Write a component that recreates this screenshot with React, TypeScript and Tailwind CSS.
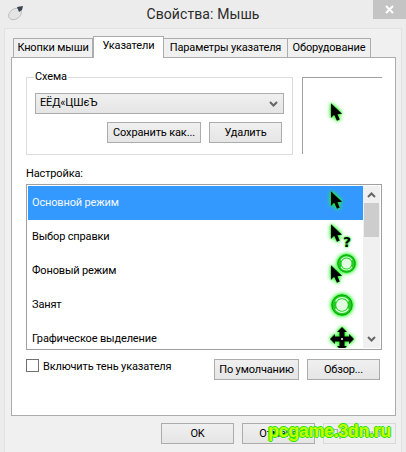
import React from 'react';

const GLOW = '[filter:drop-shadow(0_0_1px_#1dff1d)_drop-shadow(0_0_2px_#1dff1d)]';

const Arrow = ({ className = '' }: { className?: string }) => (
  <svg width="13" height="20" viewBox="0 0 14 21" className={`${GLOW} ${className}`}>
    <path d="M1 1 L1 17 L4.5 13.5 L7.5 20 L10.5 18.5 L8 13 L13 12.5 Z" fill="#000" />
  </svg>
);

const Ring = ({ size }: { size: number }) => (
  <svg width={size} height={size} viewBox="0 0 24 24" className={GLOW}>
    <circle cx="12" cy="12" r="6.5" fill="#e2fde2" />
    <circle cx="12" cy="12" r="9" fill="none" stroke="#22cc22" strokeWidth="5" />
    <circle cx="12" cy="12" r="11" fill="none" stroke="#0b9a0b" strokeWidth="1" />
    <path d="M5 8 A8 8 0 0 1 19 8" fill="none" stroke="#d8ffd8" strokeWidth="1.4" />
    <path d="M19 16 A8 8 0 0 1 5 16" fill="none" stroke="#d8ffd8" strokeWidth="1.4" />
  </svg>
);

const MoveIcon = () => (
  <svg width="26" height="26" viewBox="0 0 26 26" className={GLOW}>
    <path
      d="M13 1 L18 6 L15.5 6 L15.5 10.5 L20 10.5 L20 8 L25 13 L20 18 L20 15.5 L15.5 15.5 L15.5 20 L18 20 L13 25 L8 20 L10.5 20 L10.5 15.5 L6 15.5 L6 18 L1 13 L6 8 L6 10.5 L10.5 10.5 L10.5 6 L8 6 Z"
      fill="#000"
    />
    <circle cx="13" cy="13" r="1" fill="#fff" />
  </svg>
);

const rows = [
  { name: 'Основной режим', icon: 'arrow' },
  { name: 'Выбор справки', icon: 'help' },
  { name: 'Фоновый режим', icon: 'background' },
  { name: 'Занят', icon: 'busy' },
  { name: 'Графическое выделение', icon: 'move' },
];

const RowIcon = ({ icon }: { icon: string }) => {
  if (icon === 'arrow') return <Arrow className="absolute left-[302px] top-[4px]" />;
  if (icon === 'help')
    return (
      <>
        <Arrow className="absolute left-[302px] top-[3px]" />
        <span className="absolute left-[315px] top-[12px] font-['DejaVu_Sans',sans-serif] text-[14px] leading-[20px] font-bold text-black [text-shadow:0_0_3px_#1dff1d,0_0_2px_#1dff1d]">?</span>
      </>
    );
  if (icon === 'background')
    return (
      <>
        <Arrow className="absolute left-[302px] top-[10px]" />
        <span className="absolute left-[309px] top-0"><Ring size={19} /></span>
      </>
    );
  if (icon === 'busy')
    return <span className="absolute left-[303px] top-[6px]"><Ring size={22} /></span>;
  return <span className="absolute left-[301px] top-[4px]"><MoveIcon /></span>;
};

const Btn = ({ w, children, disabled }: { w: string; children: React.ReactNode; disabled?: boolean }) => (
  <button
    className={`${w} h-[21px] border text-[11px] tracking-[-0.15px] leading-none whitespace-nowrap ${
      disabled ? 'border-[#d9d9d9] bg-[#efefef] text-[#a0a0a0]' : 'border-[#acacac] bg-gradient-to-b from-[#f0f0f0] to-[#e5e5e5] text-black'
    }`}
  >
    {children}
  </button>
);

export default function App() {
  return (
    <div className="relative w-[406px] h-[452px] overflow-hidden bg-[#ececec] text-black font-['Roboto','Open_Sans',sans-serif]">
      {/* title bar */}
      <div className="relative h-[28px] flex items-start justify-center">
        <svg width="18" height="16" viewBox="0 0 18 16" className="absolute left-[7px] top-[5px]">
          <ellipse cx="8" cy="9" rx="7" ry="5" fill="#e4e4e4" stroke="#a8a8a8" strokeWidth="0.6" transform="rotate(-35 8 9)" />
          <path d="M10 2 L16 1 L15 5 L12 7 Z" fill="#3a4450" />
        </svg>
        <span className="mt-[3px] text-[14px] tracking-[0.1px] leading-[22px] text-[#2b2b2b]">Свойства: Мышь</span>
        <div className="absolute left-[373px] top-0 w-[33px] h-[19px] bg-[#c4c4c4] flex items-center justify-center">
          <svg width="9" height="9" viewBox="0 0 9 9">
            <path d="M1 1 L8 8 M8 1 L1 8" stroke="#fff" strokeWidth="2" />
          </svg>
        </div>
      </div>

      {/* client */}
      <div className="mx-[4px] h-[424px] border-t border-l border-r border-[#e2e2e2] bg-[#f0f0f0] pl-[6px] pt-[7px]">
        {/* tabs */}
        <div className="relative z-10 flex items-end h-[22px] pl-[2px] text-[11px] tracking-[-0.15px] text-black whitespace-nowrap">
          <div className="w-[80px] h-[19px] border border-b-0 border-[#acacac] bg-[#f0f0f0] flex items-center justify-center mb-[1px]">Кнопки мыши</div>
          <div className="w-[71px] h-[22px] border border-b-0 border-[#acacac] bg-white flex items-start pt-[1px] justify-center">Указатели</div>
          <div className="w-[125px] h-[19px] -ml-px border border-b-0 border-[#acacac] bg-[#f0f0f0] flex items-center justify-center mb-[1px]">Параметры указателя</div>
          <div className="w-[84px] h-[19px] -ml-px border border-b-0 border-[#acacac] bg-[#f0f0f0] flex items-center justify-center mb-[1px]">Оборудование</div>
        </div>

        {/* panel */}
        <div className="w-[385px] h-[359px] -mt-px border border-[#acacac] bg-white pl-[14px] pt-[12px] text-[11px] tracking-[-0.15px]">
          <div className="flex items-start">
            <fieldset className="w-[267px] h-[85px] border border-[#dcdcdc] px-[8px]">
              <legend className="px-[1px] ml-[-1px] leading-[14px]">Схема</legend>
              <div className="mt-[9px] h-[21px] border border-[#acacac] bg-gradient-to-b from-[#f0f0f0] to-[#e5e5e5] flex items-center justify-between pl-[4px] pr-[5px]">
                <span>ЕЁД«ЦШєЪ</span>
                <svg width="9" height="6" viewBox="0 0 9 6">
                  <path d="M1 1 L4.5 4.5 L8 1" fill="none" stroke="#666" strokeWidth="2" />
                </svg>
              </div>
              <div className="mt-[8px] flex justify-end gap-[8px] pr-[2px]">
                <Btn w="w-[94px]">Сохранить как...</Btn>
                <Btn w="w-[73px]">Удалить</Btn>
              </div>
            </fieldset>
            <div className="ml-[9px] mt-[7px] w-[80px] h-[77px] border-t border-l border-[#a0a0a0] pl-[27px] pt-[24px]">
              <Arrow />
            </div>
          </div>

          <div className="mt-[10px] h-[17px] leading-[17px]">Настройка:</div>
          <div className="mt-[2px] w-[356px] h-[166px] border border-[#a0a0a0] p-[1px] flex overflow-hidden">
            <div className="w-[335px] overflow-hidden">
              {rows.map((row, i) => (
                <div
                  key={row.name}
                  className={`relative h-[34px] flex items-center pl-[4px] ${i === 0 ? 'bg-[#3399ff] text-[#f4f8ff]' : ''}`}
                >
                  {row.name}
                  <RowIcon icon={row.icon} />
                </div>
              ))}
            </div>
            <div className="w-[17px] bg-[#f0f0f0] flex flex-col items-center">
              <svg width="9" height="6" viewBox="0 0 9 6" className="mt-[6px]">
                <path d="M1 5 L4.5 1.5 L8 5" fill="none" stroke="#666" strokeWidth="2" />
              </svg>
              <div className="mt-[5px] w-[15px] h-[34px] bg-[#cdcdcd]" />
              <div className="flex-1" />
              <svg width="9" height="6" viewBox="0 0 9 6" className="mb-[6px]">
                <path d="M1 1 L4.5 4.5 L8 1" fill="none" stroke="#666" strokeWidth="2" />
              </svg>
            </div>
          </div>

          <div className="mt-[9px] w-[354px] flex items-start">
            <div className="w-[13px] h-[13px] border border-[#707070] bg-white" />
            <span className="ml-[4px] leading-[15px]">Включить тень указателя</span>
            <div className="ml-auto flex gap-[8px]">
              <Btn w="w-[85px]">По умолчанию</Btn>
              <Btn w="w-[73px]">Обзор...</Btn>
            </div>
          </div>
        </div>

        {/* dialog buttons */}
        <div className="mt-[7px] w-[385px] flex justify-end gap-[8px]">
          <Btn w="w-[73px]">OK</Btn>
          <Btn w="w-[73px]">Отмена</Btn>
          <Btn w="w-[73px]" disabled>Применить</Btn>
        </div>
      </div>

      {/* watermark */}
      <div className="absolute left-[268px] top-[419px] font-['Liberation_Sans',sans-serif] text-[18px] leading-[24px] font-bold tracking-[-0.4px] text-[#c4ff00] [text-shadow:1px_0_0_#1fe600,-1px_0_0_#1fe600,0_1px_0_#1fe600,0_-1px_0_#1fe600]">
        pcgame.3dn.ru
      </div>
    </div>
  );
}
